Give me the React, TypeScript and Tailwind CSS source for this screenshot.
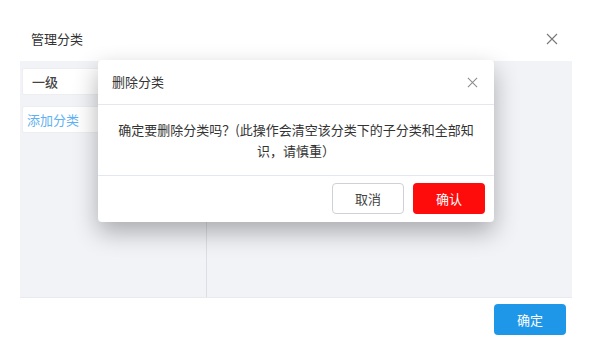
import React from 'react';

const font = { fontFamily: '"Noto Sans CJK SC", "Noto Sans", sans-serif' };

function CloseIcon({ size = 12, className = '' }: { size?: number; className?: string }) {
  return (
    <svg width={size} height={size} viewBox="0 0 12 12" className={className}>
      <path d="M1 1L11 11M11 1L1 11" stroke="currentColor" strokeWidth="1.1" fill="none" />
    </svg>
  );
}

function DeleteDialog() {
  return (
    <div className="absolute left-[98px] top-[60px] w-[396px] rounded-[4px] bg-white shadow-[0_10px_24px_rgba(0,0,0,0.3)]">
      <div className="flex h-[45px] items-center justify-between border-b border-[#e4e7ef] pl-[14px] pr-[16px]">
        <span className="text-[13px] text-[#333]">删除分类</span>
        <CloseIcon size={11} className="text-[#8a8a8a]" />
      </div>
      <div className="py-[14px]">
        <p className="mx-auto w-[362px] text-center text-[13px] leading-[21px] text-[#333]">
          确定要删除分类吗？(此操作会清空该分类下的子分类和全部知识，请慎重）
        </p>
      </div>
      <div className="flex justify-end gap-[9px] border-t border-[#e4e7ef] px-[9px] pb-[8px] pt-[7px]">
        <button className="h-[31px] w-[72px] rounded-[4px] border border-[#cfd1d6] bg-white text-[13px] text-[#444]">
          取消
        </button>
        <button className="h-[31px] w-[72px] rounded-[4px] bg-[#fe0b0b] text-[13px] text-white">
          确认
        </button>
      </div>
    </div>
  );
}

export default function App() {
  return (
    <div className="relative h-[361px] w-[592px] bg-white" style={font}>
      <div className="flex h-[61px] items-center justify-between pl-[31px] pr-[34px] pt-[17px]">
        <span className="text-[13px] text-[#333]">管理分类</span>
        <CloseIcon size={12} className="text-[#777]" />
      </div>

      <div className="mx-[20px] flex h-[237px] border-b border-[#e9eaee] bg-[#f2f3f7]">
        <div className="flex w-[187px] flex-col gap-[11px] border-r border-[#dddee3] pl-[2px] pr-[2px] pt-[7px]">
          <div className="flex h-[27px] items-center rounded-[2px] border border-[#eceef2] bg-white pl-[9px] text-[13px] font-medium text-[#444]">
            一级
          </div>
          <div className="flex h-[27px] items-center rounded-[2px] border border-[#eceef2] bg-white pl-[4px] text-[13px] text-[#5fb1f2]">
            添加分类
          </div>
        </div>
        <div className="flex-1" />
      </div>

      <div className="flex justify-end pr-[26px] pt-[6px]">
        <button className="h-[31px] w-[72px] rounded-[4px] bg-[#1f97e8] text-[13px] text-white">
          确定
        </button>
      </div>

      <DeleteDialog />
    </div>
  );
}
